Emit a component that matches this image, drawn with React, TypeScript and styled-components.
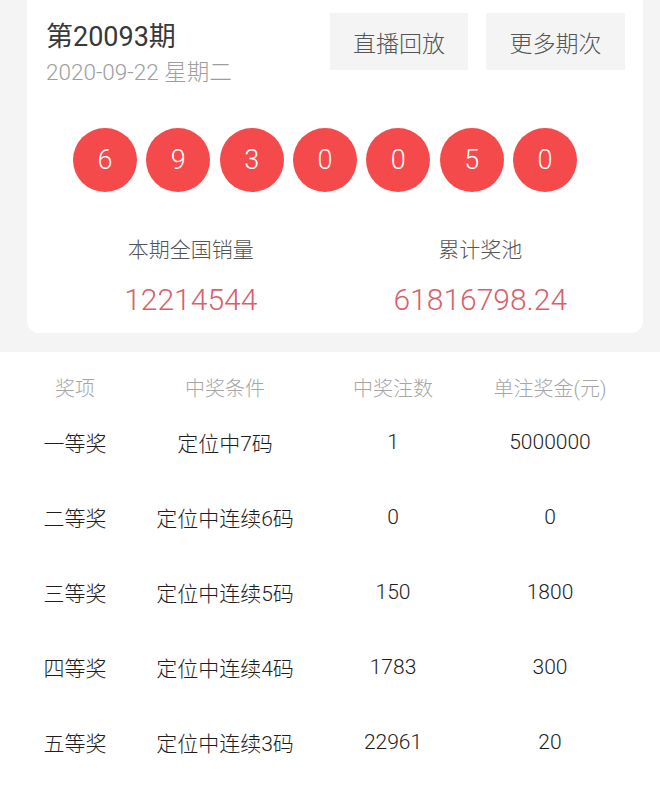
import React from "react";
import styled, { createGlobalStyle } from "styled-components";

const GlobalStyle = createGlobalStyle`
  html, body {
    margin: 0;
    padding: 0;
    background: #f4f4f4;
  }
  body {
    font-family: Roboto, "Noto Sans CJK SC", "Noto Sans", sans-serif;
    font-weight: 300;
    -webkit-font-smoothing: antialiased;
  }
`;

const Page = styled.div`
  width: 660px;
  min-height: 802px;
  background: #f4f4f4;
  display: flex;
  flex-direction: column;
  overflow: hidden;
`;

const Card = styled.section`
  margin-left: 27px;
  width: 616px;
  box-sizing: border-box;
  background: #ffffff;
  border-radius: 0 0 12px 12px;
  padding: 13px 18px 13px 19px;
  display: flex;
  flex-direction: column;
`;

const HeaderRow = styled.div`
  display: flex;
  justify-content: space-between;
  align-items: flex-start;
`;

const TitleBlock = styled.div`
  display: flex;
  flex-direction: column;
  padding-top: 7px;
`;

const Title = styled.div`
  font-size: 27px;
  line-height: 34px;
  font-weight: 400;
  color: #383838;
`;

const DateText = styled.div`
  margin-top: 3px;
  font-size: 22.5px;
  line-height: 30px;
  color: #9e9e9e;
`;

const ButtonGroup = styled.div`
  display: flex;
  gap: 18px;
`;

const ActionButton = styled.button<{ $w: number }>`
  width: ${(p) => p.$w}px;
  height: 57px;
  border: none;
  background: #f4f4f4;
  color: #555555;
  font-family: Roboto, "Noto Sans CJK SC", sans-serif;
  font-weight: 300;
  font-size: 23px;
  padding: 0;
  display: flex;
  align-items: center;
  justify-content: center;
  cursor: pointer;
`;

const BallRow = styled.div`
  display: flex;
  gap: 9.33px;
  margin-top: 41px;
  padding-left: 27px;
`;

const Ball = styled.div`
  width: 64px;
  height: 64px;
  border-radius: 50%;
  background: #f44a4b;
  color: #ffffff;
  font-size: 27px;
  display: flex;
  align-items: center;
  justify-content: center;
`;

const StatsRow = styled.div`
  display: grid;
  grid-template-columns: 1fr 1fr;
  margin-top: 44px;
`;

const Stat = styled.div`
  display: flex;
  flex-direction: column;
  align-items: center;
`;

const StatLabel = styled.div`
  font-size: 21px;
  line-height: 28px;
  color: #555555;
`;

const StatValue = styled.div`
  margin-top: 16px;
  font-size: 30px;
  line-height: 40px;
  color: #d95f69;
`;

const TableSection = styled.section`
  margin-top: 19px;
  background: #ffffff;
  flex: 1;
  padding-top: 18px;
`;

const TableRow = styled.div<{ $head?: boolean }>`
  display: grid;
  grid-template-columns: 150px 150px 186px 128px;
  align-items: center;
  height: ${(p) => (p.$head ? 34 : 75)}px;
  font-size: ${(p) => (p.$head ? 20 : 21)}px;
  color: ${(p) => (p.$head ? "#a6a6a6" : "#1e1e1e")};
`;

const Cell = styled.div`
  text-align: center;
  white-space: nowrap;
`;

const balls = ["6", "9", "3", "0", "0", "5", "0"];

const rows = [
  ["一等奖", "定位中7码", "1", "5000000"],
  ["二等奖", "定位中连续6码", "0", "0"],
  ["三等奖", "定位中连续5码", "150", "1800"],
  ["四等奖", "定位中连续4码", "1783", "300"],
  ["五等奖", "定位中连续3码", "22961", "20"],
];

export default function App() {
  return (
    <>
      <GlobalStyle />
      <Page>
        <Card>
          <HeaderRow>
            <TitleBlock>
              <Title>第20093期</Title>
              <DateText>2020-09-22 星期二</DateText>
            </TitleBlock>
            <ButtonGroup>
              <ActionButton $w={138}>直播回放</ActionButton>
              <ActionButton $w={139}>更多期次</ActionButton>
            </ButtonGroup>
          </HeaderRow>
          <BallRow>
            {balls.map((b, i) => (
              <Ball key={i}>{b}</Ball>
            ))}
          </BallRow>
          <StatsRow>
            <Stat>
              <StatLabel>本期全国销量</StatLabel>
              <StatValue>12214544</StatValue>
            </Stat>
            <Stat>
              <StatLabel>累计奖池</StatLabel>
              <StatValue>61816798.24</StatValue>
            </Stat>
          </StatsRow>
        </Card>
        <TableSection>
          <TableRow $head>
            <Cell>奖项</Cell>
            <Cell>中奖条件</Cell>
            <Cell>中奖注数</Cell>
            <Cell>单注奖金(元)</Cell>
          </TableRow>
          {rows.map((r) => (
            <TableRow key={r[0]}>
              {r.map((c, j) => (
                <Cell key={j}>{c}</Cell>
              ))}
            </TableRow>
          ))}
        </TableSection>
      </Page>
    </>
  );
}
